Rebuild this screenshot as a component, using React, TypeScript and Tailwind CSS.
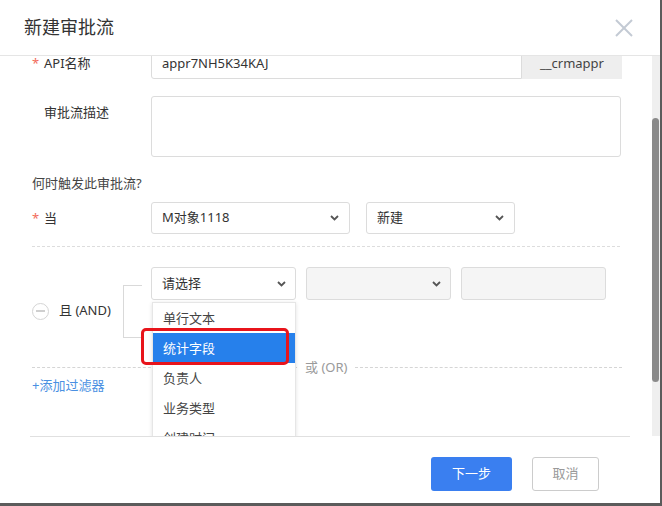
import React from "react";

const font = {
  fontFamily: '"Noto Sans", "Noto Sans CJK SC", sans-serif',
};

const Chevron = () => (
  <svg width="9" height="6" viewBox="0 0 9 6" className="shrink-0">
    <polyline points="1,1 4.5,4.5 8,1" fill="none" stroke="#555" strokeWidth="1.8" />
  </svg>
);

const options = ["单行文本", "统计字段", "负责人", "业务类型", "创建时间", "创建人", "最后修改时间"];

export default function App() {
  return (
    <div className="w-[662px] h-[506px] bg-[#5b5b5b] text-[13px] text-[#333]" style={font}>
      <div className="w-[660px] h-[503px] bg-white flex flex-col">
        {/* header */}
        <div className="h-[56px] shrink-0 border-b border-[#e5e5e5] flex items-center justify-between pl-[24px] pr-[27px]">
          <div className="text-[18px] text-[#333]">新建审批流</div>
          <svg width="18" height="18" viewBox="0 0 18 18">
            <line x1="1" y1="1" x2="17" y2="17" stroke="#c3cad4" strokeWidth="2" />
            <line x1="17" y1="1" x2="1" y2="17" stroke="#c3cad4" strokeWidth="2" />
          </svg>
        </div>

        {/* body, scrolled a little */}
        <div className="relative h-[380px] shrink-0 overflow-hidden">
          <div className="-mt-[9px] pl-[32px] pr-[38px]">
            {/* API name */}
            <div className="flex h-[32px]">
              <div className="relative w-[119px] pl-[12px] flex items-center pt-[1px] leading-none">
                <span className="absolute left-0 text-[#f26b5b]">*</span>
                API名称
              </div>
              <div className="flex flex-1">
                <div className="flex-1 border border-[#dcdcdc] rounded-l-[3px] px-[10px] flex items-center pt-[1px] leading-none">
                  appr7NH5K34KAJ
                </div>
                <div className="w-[100px] bg-[#eeeeee] flex items-center justify-center pt-[1px] leading-none text-[#444]">__crmappr</div>
              </div>
            </div>

            {/* description */}
            <div className="flex mt-[17px]">
              <div className="w-[119px] pl-[12px] leading-[32px]">审批流描述</div>
              <div className="flex-1 h-[61px] border border-[#dcdcdc] rounded-[3px] mr-[1px]" />
            </div>

            <div className="mt-[16px] leading-[20px] text-[#444]">何时触发此审批流?</div>

            {/* when */}
            <div className="flex mt-[9px] h-[32px]">
              <div className="relative w-[119px] pl-[12px] leading-[32px]">
                <span className="absolute left-0 text-[#f26b5b]">*</span>
                当
              </div>
              <div className="w-[199px] border border-[#dcdcdc] rounded-[3px] flex items-center justify-between pl-[10px] pr-[10px]">
                <span>M对象1118</span>
                <Chevron />
              </div>
              <div className="ml-[16px] w-[149px] border border-[#dcdcdc] rounded-[3px] flex items-center justify-between pl-[10px] pr-[10px]">
                <span>新建</span>
                <Chevron />
              </div>
            </div>

            <div className="mt-[12px] mr-[2px] border-t border-dashed border-[#dddddd]" />

            {/* filter group */}
            <div className="mt-[20px] h-[88px] flex items-center">
              <div className="w-[91px] flex items-center">
                <div className="w-[17px] h-[17px] rounded-full border border-[#d5d5d5] flex items-center justify-center">
                  <div className="w-[9px] h-[1.5px] bg-[#cfcfcf]" />
                </div>
                <span className="ml-[10px]">且 (AND)</span>
              </div>
              <div className="w-[19px] h-[53px] border-l border-t border-b border-[#d9d9d9]" />
              <div className="self-start ml-[9px] flex gap-[10px]">
                <div className="relative">
                  <div className="w-[145px] h-[33px] border border-[#dcdcdc] rounded-[3px] flex items-center justify-between pl-[10px] pr-[9px]">
                    <span>请选择</span>
                    <Chevron />
                  </div>
                  <div className="absolute z-10 left-[1px] top-[35px] w-[144px] bg-white border border-[#e6e6e6] shadow-[0_1px_4px_rgba(0,0,0,0.12)]">
                    {options.map((o) => (
                      <div
                        key={o}
                        className={
                          o === "统计字段"
                            ? "h-[30px] leading-[30px] px-[10px] bg-[#2680eb] text-white"
                            : "h-[30px] leading-[30px] px-[10px] text-[#444]"
                        }
                      >
                        {o}
                      </div>
                    ))}
                  </div>
                  <div className="absolute z-20 left-[-10px] top-[61px] w-[148px] h-[37px] border-[3px] border-[#e8141b] rounded-[5px]" />
                </div>
                <div className="w-[145px] h-[33px] border border-[#dcdcdc] bg-[#f5f5f5] rounded-[3px] flex items-center justify-end pr-[9px]">
                  <Chevron />
                </div>
                <div className="w-[145px] h-[33px] border border-[#dcdcdc] bg-[#f5f5f5] rounded-[3px]" />
              </div>
            </div>

            {/* or */}
            <div className="mt-[3px] h-[18px] flex items-center">
              <div className="w-[265px] border-t border-dashed border-[#d5d5d5]" />
              <span className="px-[8px] text-[#9a9a9a] leading-[18px]">或 (OR)</span>
              <div className="flex-1 border-t border-dashed border-[#d5d5d5]" />
            </div>

            <div className="leading-[18px] text-[#4a90e2]">+添加过滤器</div>
          </div>

          {/* scrollbar */}
          <div className="absolute right-0 top-0 bottom-0 w-[8px] bg-[#efefef]">
            <div className="absolute left-0 top-[62px] w-[7px] h-[264px] rounded-[4px] bg-[#8a8a8a]" />
          </div>
        </div>

        {/* footer */}
        <div className="flex-1 mx-[30px] border-t border-[#e0e0e0] flex justify-end items-start pt-[20px] pr-[31px] gap-[20px]">
          <button className="w-[81px] h-[34px] rounded-[3px] bg-[#3a7ff0] text-white text-[13px]">下一步</button>
          <button className="w-[67px] h-[34px] rounded-[3px] border border-[#cccccc] bg-white text-[#999] text-[13px]">取消</button>
        </div>
      </div>
    </div>
  );
}
